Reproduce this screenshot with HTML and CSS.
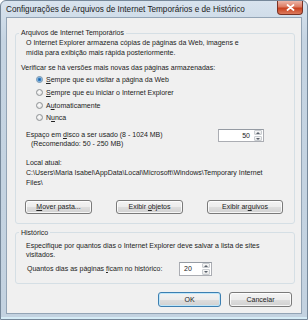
FILE: index.html
```html
<!DOCTYPE html>
<html lang="pt-BR">
<head>
    <meta charset="UTF-8">
    <meta name="viewport" content="width=device-width, initial-scale=1.0">
    <title>Configurações de Arquivos de Internet Temporários e de Histórico</title>
    <link rel="stylesheet" href="styles.css">
</head>
<body>
    <div class="window">
        <div class="titlebar">
            <span class="title">Configurações de Arquivos de Internet Temporários e de Histórico</span>
            <button class="close" title="Fechar">
                <svg width="9" height="7" viewBox="0 0 9 7"><path d="M1.5 1 L7.5 6 M7.5 1 L1.5 6" stroke="#fff" stroke-width="1.7" stroke-linecap="round"/></svg>
            </button>
        </div>

        <div class="client">
            <fieldset class="group temp">
                <legend>Arquivos de Internet Temporários</legend>
                <p class="desc">O Internet Explorer armazena cópias de páginas da Web, imagens e<br>mídia para exibição mais rápida posteriormente.</p>
                <p class="question">Verificar se há versões mais novas das páginas armazenadas:</p>

                <div class="radios">
                    <label class="radio-item"><span class="radio checked"></span><span><u>S</u>empre que eu visitar a página da Web</span></label>
                    <label class="radio-item"><span class="radio"></span><span><u>S</u>empre que eu iniciar o Internet Explorer</span></label>
                    <label class="radio-item"><span class="radio"></span><span>A<u>u</u>tomaticamente</span></label>
                    <label class="radio-item"><span class="radio"></span><span>N<u>u</u>nca</span></label>
                </div>

                <div class="disk-row">
                    <div class="disk-label">
                        <span>Espaço em <u>d</u>isco a ser usado (8 - 1024 MB)</span>
                        <span class="rec">(Recomendado: 50 - 250 MB)</span>
                    </div>
                    <div class="spin disk-spin">
                        <span class="spin-value">50</span>
                        <span class="spin-arrows"><span class="arrow up"></span><span class="arrow down"></span></span>
                    </div>
                </div>

                <p class="location">Local atual:<br>C:\Users\Maria Isabel\AppData\Local\Microsoft\Windows\Temporary Internet<br>Files\</p>

                <div class="group-buttons">
                    <button class="btn move"><u>M</u>over pasta...</button>
                    <button class="btn objects">Exibir <u>o</u>bjetos</button>
                    <button class="btn files">Exibir ar<u>q</u>uivos</button>
                </div>
            </fieldset>

            <fieldset class="group history">
                <legend>Histórico</legend>
                <p class="desc">Especifique por quantos dias o Internet Explorer deve salvar a lista de sites<br>visitados.</p>
                <div class="days-row">
                    <span class="days-label">Quantos dias as páginas <u>f</u>icam no histórico:</span>
                    <div class="spin days-spin">
                        <span class="spin-value">20</span>
                        <span class="spin-arrows"><span class="arrow up"></span><span class="arrow down"></span></span>
                    </div>
                </div>
            </fieldset>

            <div class="dialog-buttons">
                <button class="btn default">OK</button>
                <button class="btn">Cancelar</button>
            </div>
        </div>
    </div>
</body>
</html>
```

FILE: styles.css
```css
* {
    box-sizing: border-box;
}
body {
    margin: 0;
    font-family: 'Liberation Sans', Arial, sans-serif;
    font-size: 7px;
    color: #222222;
    background: #ffffff;
}
p {
    margin: 0;
}
.window {
    width: 308px;
    height: 320px;
    display: flex;
    flex-direction: column;
    border: 1px solid #76889a;
    border-radius: 6px 6px 0 0;
    background: linear-gradient(#d8e3ee, #c5d4e2 40px, #c3d2e0);
    box-shadow: inset 0 -2px 0 #d6ecf6;
}
.titlebar {
    height: 16px;
    display: flex;
    align-items: flex-start;
    justify-content: space-between;
    padding-left: 5px;
    padding-right: 4px;
}
.title {
    font-size: 8.2px;
    line-height: 17px;
    color: #1b1b1b;
}
.close {
    width: 26px;
    height: 14px;
    padding: 0;
    border: 1px solid #7a3224;
    border-top: none;
    border-radius: 0 0 4px 4px;
    background: linear-gradient(#edb6a8, #dc7b62 45%, #c8411f 55%, #dc7a5c);
    display: flex;
    align-items: center;
    justify-content: center;
}
.client {
    flex: 1;
    margin: 0 5px 5px;
    border: 1px solid #93a4b5;
    background: #f0f0f0;
    padding: 10px 6px 0 8px;
    display: flex;
    flex-direction: column;
}
.group {
    margin: 0;
    border: 1px solid #d5dfe5;
    border-radius: 3px;
    padding: 0 8px 9px 3px;
    min-inline-size: 0;
}
.group legend {
    padding: 0 2px;
    line-height: 10px;
}
.temp .desc {
    margin-left: 7px;
    line-height: 10.4px;
}
.question {
    margin: 4.5px 0 0 2px;
    line-height: 10px;
}
.radios {
    margin-left: 17px;
    display: flex;
    flex-direction: column;
}
.radio-item {
    height: 12.7px;
    display: flex;
    align-items: center;
}
.radio {
    width: 7px;
    height: 7px;
    margin-right: 3px;
    border-radius: 50%;
    border: 1px solid #8f9396;
    background: radial-gradient(circle at 45% 40%, #ffffff, #e2e2e2 70%, #cfcfcf);
}
.radio.checked {
    border-color: #6d8fae;
    background: radial-gradient(circle, #1f5f9f 0, #3a84c8 1.4px, #a9cde9 2.4px, #eef4f9 3px);
}
.disk-row {
    margin: 5.5px 0 0 7px;
    display: flex;
    align-items: flex-start;
}
.disk-label {
    width: 192px;
    display: flex;
    flex-direction: column;
    line-height: 9.5px;
}
.rec {
    margin-left: 5px;
}
.spin {
    display: flex;
    background: #ffffff;
    border: 1px solid #abadb3;
    border-top-color: #959ba3;
}
.disk-spin {
    width: 46px;
    height: 13px;
    margin-top: -0.5px;
}
.spin-value {
    flex: 1;
    line-height: 11px;
    text-align: right;
    padding-right: 4px;
}
.spin-arrows {
    width: 9px;
    display: flex;
    flex-direction: column;
    gap: 1px;
    padding: 0 1px 0 0;
}
.arrow {
    flex: 1;
    display: flex;
    align-items: center;
    justify-content: center;
    border: 1px solid #c9cdd1;
    border-radius: 1px;
    background: linear-gradient(#f8f8f8, #e6e6e6);
}
.arrow::after {
    content: "";
    border-left: 2px solid transparent;
    border-right: 2px solid transparent;
}
.arrow.up::after {
    border-bottom: 2px solid #59616b;
}
.arrow.down::after {
    border-top: 2px solid #59616b;
}
.location {
    margin: 9.4px 0 0 7px;
    line-height: 10px;
}
.group-buttons {
    width: 258px;
    margin: 12px 0 0 6px;
    display: flex;
    justify-content: space-between;
}
.btn {
    height: 14px;
    padding: 0;
    font-family: inherit;
    font-size: 7px;
    color: #222222;
    border: 1px solid #7a7a7a;
    border-radius: 3px;
    background: linear-gradient(#f3f3f3, #ececec 50%, #dedede 51%, #d1d1d1);
    box-shadow: inset 0 0 0 1px rgba(255, 255, 255, 0.8);
}
.move,
.objects {
    width: 67px;
}
.files {
    width: 76px;
}
.history {
    margin-top: 4px;
    padding-bottom: 7px;
}
.history .desc {
    margin: 3px 0 0 7px;
    line-height: 9.5px;
}
.days-row {
    height: 14px;
    margin: 2px 0 0 8px;
    display: flex;
    align-items: center;
}
.days-label {
    width: 152px;
}
.days-spin {
    width: 33px;
    height: 14px;
}
.days-spin .spin-value {
    text-align: left;
    padding: 0 0 0 4px;
    line-height: 12px;
}
.dialog-buttons {
    margin: 8px 3px 0 0;
    display: flex;
    justify-content: flex-end;
    gap: 8px;
}
.dialog-buttons .btn {
    width: 63px;
    height: 15px;
}
.btn.default {
    border-color: #3c7fb1;
    box-shadow: inset 0 0 0 1px #bfe6f9;
}
```
